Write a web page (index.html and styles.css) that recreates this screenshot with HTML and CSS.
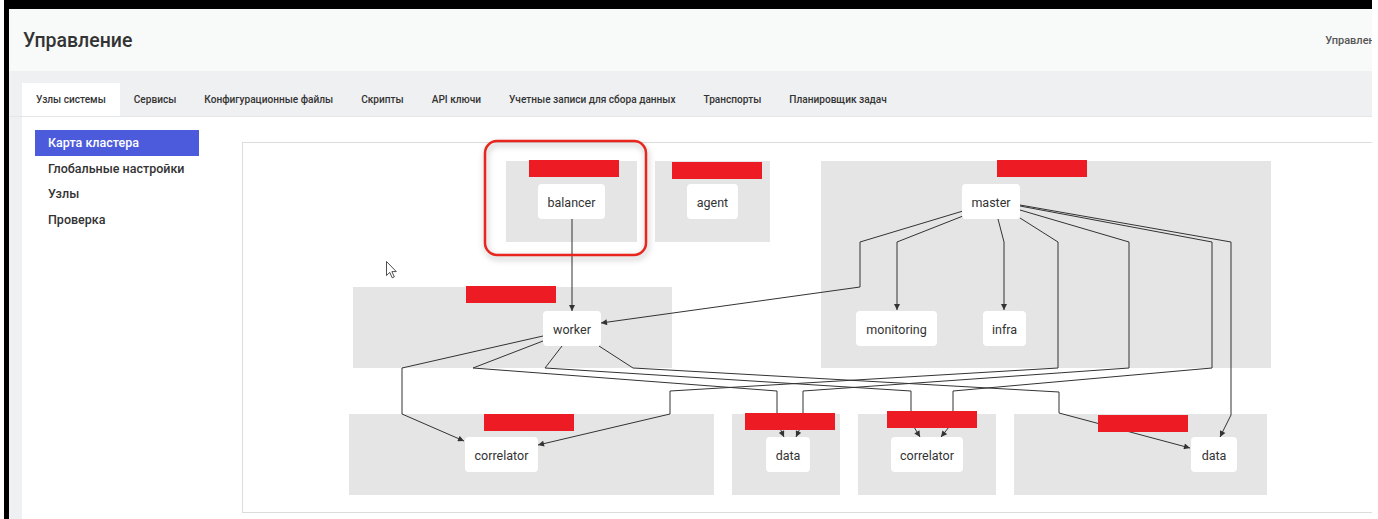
FILE: index.html
```html
<!DOCTYPE html>
<html lang="ru">
<head>
    <meta charset="UTF-8">
    <title>Управление</title>
    <link rel="stylesheet" href="styles.css">
</head>
<body>
    <div class="screen">
        <div class="page">
            <header class="topbar">
                <h1>Управление</h1>
                <span class="crumb">Управление</span>
            </header>

            <nav class="tabs">
                <a class="tab active">Узлы системы</a>
                <a class="tab">Сервисы</a>
                <a class="tab">Конфигурационные файлы</a>
                <a class="tab">Скрипты</a>
                <a class="tab">API ключи</a>
                <a class="tab">Учетные записи для сбора данных</a>
                <a class="tab">Транспорты</a>
                <a class="tab">Планировщик задач</a>
            </nav>

            <div class="content">
                <aside class="sidemenu">
                    <div class="side-item active">Карта кластера</div>
                    <div class="side-item">Глобальные настройки</div>
                    <div class="side-item">Узлы</div>
                    <div class="side-item">Проверка</div>
                </aside>

                <section class="map">
                    <!-- viewBox uses page coordinates so the graph reads like the layout output -->
                    <svg class="graph" width="1150" height="369" viewBox="243 143 1150 369">
                        <defs>
                            <marker id="arrow" viewBox="0 0 10 10" refX="10" refY="5" markerUnits="userSpaceOnUse" markerWidth="7" markerHeight="6" orient="auto">
                                <path d="M0 0 L10 5 L0 10 z" fill="#333"></path>
                            </marker>
                        </defs>

                        <!-- clusters -->
                        <rect class="cluster" x="506" y="161" width="131" height="81"></rect>
                        <rect class="cluster" x="655" y="161" width="115" height="81"></rect>
                        <rect class="cluster" x="821" y="161" width="450" height="207"></rect>
                        <rect class="cluster" x="353" y="287" width="319" height="81"></rect>
                        <rect class="cluster" x="349" y="414" width="365" height="81"></rect>
                        <rect class="cluster" x="732" y="414" width="108" height="81"></rect>
                        <rect class="cluster" x="858" y="414" width="138" height="81"></rect>
                        <rect class="cluster" x="1014" y="414" width="253" height="81"></rect>

                        <!-- edges -->
                        <path class="edge" d="M572 219 L572 311"></path>
                        <path class="edge" d="M963 211 L860 242 L860 287 L601 323"></path>
                        <path class="edge" d="M963 216 L897 242 L897 310"></path>
                        <path class="edge" d="M998 219 L1004 242 L1004 310"></path>
                        <path class="edge" d="M1020 218 L1058 242 L1058 368 L670 391 L670 414 L538 445"></path>
                        <path class="edge" d="M1020 210 L1129 242 L1129 368 L803 391 L803 422 L796 437"></path>
                        <path class="edge" d="M1020 206 L1212 242 L1212 368 L953 391 L953 422 L941 437"></path>
                        <path class="edge" d="M1020 205 L1231 242 L1231 415 L1220 437"></path>
                        <path class="edge" d="M543 336 L402 368 L402 414 L464 441"></path>
                        <path class="edge" d="M543 341 L473 368 L777 391 L777 422 L784 437"></path>
                        <path class="edge" d="M562 346 L545 368 L911 391 L911 422 L920 437"></path>
                        <path class="edge" d="M599 346 L633 368 L1059 392 L1059 413 L1190 448"></path>

                        <!-- cluster names (hidden) -->
                        <rect class="tag" x="529" y="160" width="90" height="17"></rect>
                        <rect class="tag" x="672" y="162" width="90" height="17"></rect>
                        <rect class="tag" x="997" y="160" width="90" height="17"></rect>
                        <rect class="tag" x="466" y="286" width="90" height="17"></rect>
                        <rect class="tag" x="484" y="414" width="90" height="17"></rect>
                        <rect class="tag" x="745" y="413" width="90" height="17"></rect>
                        <rect class="tag" x="887" y="411" width="90" height="17"></rect>
                        <rect class="tag" x="1098" y="415" width="90" height="17"></rect>

                        <!-- nodes -->
                        <g class="node"><rect x="538" y="184" width="67" height="35" rx="4"></rect><text x="571.5" y="202">balancer</text></g>
                        <g class="node"><rect x="687" y="184" width="51" height="35" rx="4"></rect><text x="712.5" y="202">agent</text></g>
                        <g class="node"><rect x="962" y="184" width="58" height="35" rx="4"></rect><text x="991" y="202">master</text></g>
                        <g class="node"><rect x="856" y="311" width="81" height="35" rx="4"></rect><text x="896.5" y="329">monitoring</text></g>
                        <g class="node"><rect x="983" y="311" width="43" height="35" rx="4"></rect><text x="1004.5" y="329">infra</text></g>
                        <g class="node"><rect x="543" y="311" width="58" height="35" rx="4"></rect><text x="572" y="329">worker</text></g>
                        <g class="node"><rect x="465" y="437" width="73" height="35" rx="4"></rect><text x="501.5" y="455">correlator</text></g>
                        <g class="node"><rect x="766" y="437" width="44" height="35" rx="4"></rect><text x="788" y="455">data</text></g>
                        <g class="node"><rect x="891" y="437" width="72" height="35" rx="4"></rect><text x="927" y="455">correlator</text></g>
                        <g class="node"><rect x="1191" y="437" width="46" height="35" rx="4"></rect><text x="1214" y="455">data</text></g>

                        <!-- highlight around balancer -->
                        <rect class="mark" x="485" y="141" width="161" height="114" rx="12"></rect>

                        <!-- mouse pointer -->
                        <path class="pointer" d="M386.5 261.5 L386.5 275.5 L389.8 272.4 L392.2 277.8 L394.3 276.9 L391.9 271.6 L396.3 271.6 Z"></path>
                    </svg>
                </section>
            </div>
        </div>
    </div>
</body>
</html>
```

FILE: styles.css
```css
body {
    margin: 0;
    background-color: #fff;
    font-family: Roboto, "Open Sans", sans-serif;
    color: #333;
    overflow: hidden;
}

.screen {
    margin-left: 4px;
    width: 1368px;
    height: 519px;
    box-sizing: border-box;
    border-top: 9px solid #000;
    border-left: 5px solid #000;
    overflow: hidden;
}

.page {
    width: 1400px;
    height: 100%;
    background-color: #eff0f2;
}

.topbar {
    height: 62px;
    display: flex;
    align-items: center;
    padding: 0 22px 0 14px;
    background-color: #f8f9f9;
}

.topbar h1 {
    margin: 0;
    font-size: 19.5px;
    font-weight: 500;
    color: #333;
}

.crumb {
    margin-left: auto;
    font-size: 11px;
    font-weight: 500;
    color: #555;
}

.tabs {
    height: 46px;
    display: flex;
    align-items: flex-end;
    padding-left: 13px;
    box-sizing: border-box;
    border-bottom: 1px solid #e5e6e8;
}

.tab {
    height: 33px;
    line-height: 33px;
    padding: 0 14px;
    font-size: 10.1px;
    font-weight: 500;
    color: #333;
    white-space: nowrap;
}

.tab.active {
    background-color: #fff;
}

.content {
    display: flex;
    align-items: flex-start;
    margin-left: 13px;
    height: 402px;
    padding-top: 13px;
    box-sizing: border-box;
    background-color: #fff;
}

.sidemenu {
    width: 164px;
    margin-left: 13px;
}

.side-item {
    height: 25.5px;
    line-height: 25.5px;
    padding-left: 13px;
    font-size: 12.5px;
    font-weight: 500;
    color: #333;
    white-space: nowrap;
}

.side-item.active {
    background-color: #4c5bdc;
    color: #fff;
}

.map {
    margin-left: 43px;
    margin-top: 12px;
    border: 1px solid #dcdcdc;
    background-color: #fff;
}

.graph {
    display: block;
    overflow: visible;
}

.cluster {
    fill: #e5e5e5;
}

.tag {
    fill: #ed1c24;
}

.edge {
    fill: none;
    stroke: #333;
    stroke-width: 1;
    marker-end: url(#arrow);
}

.node rect {
    fill: #fff;
}

.node text {
    font-size: 12.5px;
    fill: #333;
    text-anchor: middle;
    dominant-baseline: central;
}

.mark {
    fill: none;
    stroke: #e8261e;
    stroke-width: 2.5;
    filter: drop-shadow(1px 3px 3px rgba(0, 0, 0, 0.3));
}

.pointer {
    fill: #fff;
    stroke: #222;
    stroke-width: 0.8;
}
```
